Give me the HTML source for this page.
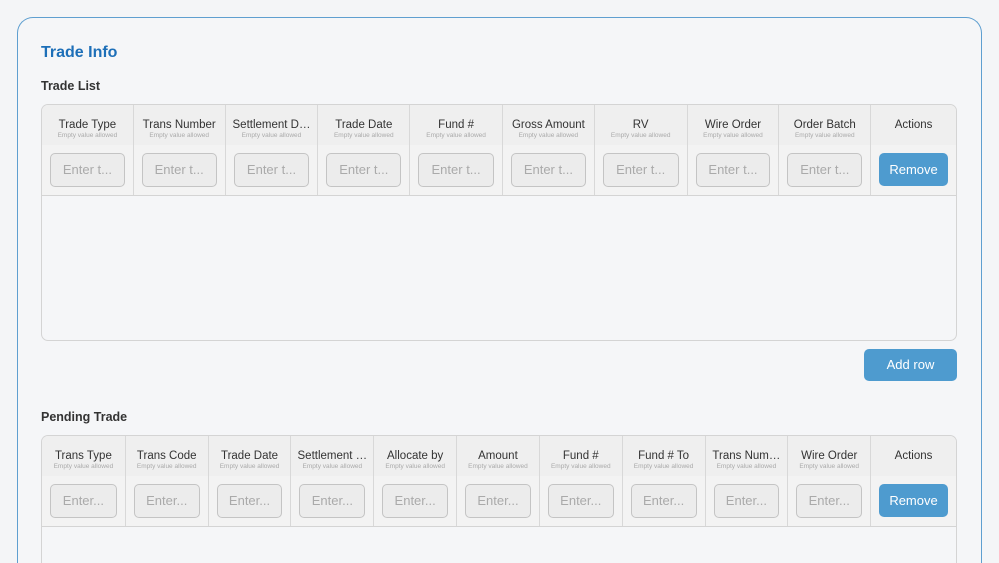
<!DOCTYPE html><html style="overflow:hidden;height:563px"><head><style>
*{box-sizing:border-box;margin:0;padding:0}
body{width:999px;height:563px;overflow:hidden;background:#f4f5f7;font-family:"Liberation Sans",sans-serif}
.wrap{position:relative;width:999px;height:563px;overflow:hidden}
.card{position:absolute;left:17px;top:17px;width:965px;height:546px;border:1px solid #5f9fd0;border-bottom:none;border-radius:16px 16px 0 0;background:#f5f6f8}
h1{position:absolute;left:41px;top:44px;font-size:16px;color:#1d6fb8;font-weight:bold}
h2{position:absolute;left:41px;font-size:12.5px;color:#333;font-weight:bold}
.tbl{position:absolute;left:41px;width:916px;border:1px solid #d4d4d4;border-radius:7px;overflow:hidden;background:#f5f6f8}
.row{display:flex}
.hd{height:40px;background:#efefef}
.in{height:51px;border-bottom:1px solid #d4d4d4;background:#f3f3f3}
.c{border-right:1px solid #d8d8d8;text-align:center;position:relative}
.c:last-child{border-right:none}
.hd .c{padding-top:14px;font-size:11.5px;color:#333;white-space:nowrap;overflow:hidden}
.hd .c small{display:block;font-size:6.5px;color:#aaa;margin-top:1px}
.box{position:absolute;left:8px;right:8px;top:8px;height:34px;border:1px solid #c4c4c4;border-radius:5px;background:#ececec;color:#aaa;font-size:13px;line-height:32px;text-align:center}
.btn{position:absolute;left:8px;right:8px;top:8px;height:33px;background:#4e9bcf;color:#fff;border-radius:5px;font-size:13px;line-height:33px;text-align:center}
.add{position:absolute;left:864px;top:349px;width:93px;height:32px;background:#4e9bcf;color:#fff;border-radius:5px;font-size:13px;line-height:32px;text-align:center}
</style></head><body><div class="wrap">
<div class="card"></div>
<h1>Trade Info</h1>
<h2 style="top:79px">Trade List</h2>
<div class="tbl" style="top:104px;height:237px">
<div class="row hd">
<div class="c" style="width:92px">Trade Type<small>Empty value allowed</small></div>
<div class="c" style="width:92px">Trans Number<small>Empty value allowed</small></div>
<div class="c" style="width:93px">Settlement D…<small>Empty value allowed</small></div>
<div class="c" style="width:92px">Trade Date<small>Empty value allowed</small></div>
<div class="c" style="width:93px">Fund #<small>Empty value allowed</small></div>
<div class="c" style="width:92px">Gross Amount<small>Empty value allowed</small></div>
<div class="c" style="width:93px">RV<small>Empty value allowed</small></div>
<div class="c" style="width:92px">Wire Order<small>Empty value allowed</small></div>
<div class="c" style="width:92px">Order Batch<small>Empty value allowed</small></div>
<div class="c" style="width:85px">Actions</div>
</div>
<div class="row in">
<div class="c" style="width:92px"><div class="box">Enter t...</div></div>
<div class="c" style="width:92px"><div class="box">Enter t...</div></div>
<div class="c" style="width:93px"><div class="box">Enter t...</div></div>
<div class="c" style="width:92px"><div class="box">Enter t...</div></div>
<div class="c" style="width:93px"><div class="box">Enter t...</div></div>
<div class="c" style="width:92px"><div class="box">Enter t...</div></div>
<div class="c" style="width:93px"><div class="box">Enter t...</div></div>
<div class="c" style="width:92px"><div class="box">Enter t...</div></div>
<div class="c" style="width:92px"><div class="box">Enter t...</div></div>
<div class="c" style="width:85px"><div class="btn">Remove</div></div>
</div>
</div>
<div class="add">Add row</div>
<h2 style="top:410px">Pending Trade</h2>
<div class="tbl" style="top:435px;height:128px;border-bottom:none;border-radius:7px 7px 0 0">
<div class="row hd">
<div class="c" style="width:84px">Trans Type<small>Empty value allowed</small></div>
<div class="c" style="width:83px">Trans Code<small>Empty value allowed</small></div>
<div class="c" style="width:83px">Trade Date<small>Empty value allowed</small></div>
<div class="c" style="width:83px">Settlement …<small>Empty value allowed</small></div>
<div class="c" style="width:83px">Allocate by<small>Empty value allowed</small></div>
<div class="c" style="width:83px">Amount<small>Empty value allowed</small></div>
<div class="c" style="width:83px">Fund #<small>Empty value allowed</small></div>
<div class="c" style="width:83px">Fund # To<small>Empty value allowed</small></div>
<div class="c" style="width:83px">Trans Num…<small>Empty value allowed</small></div>
<div class="c" style="width:83px">Wire Order<small>Empty value allowed</small></div>
<div class="c" style="width:85px">Actions</div>
</div>
<div class="row in">
<div class="c" style="width:84px"><div class="box">Enter...</div></div>
<div class="c" style="width:83px"><div class="box">Enter...</div></div>
<div class="c" style="width:83px"><div class="box">Enter...</div></div>
<div class="c" style="width:83px"><div class="box">Enter...</div></div>
<div class="c" style="width:83px"><div class="box">Enter...</div></div>
<div class="c" style="width:83px"><div class="box">Enter...</div></div>
<div class="c" style="width:83px"><div class="box">Enter...</div></div>
<div class="c" style="width:83px"><div class="box">Enter...</div></div>
<div class="c" style="width:83px"><div class="box">Enter...</div></div>
<div class="c" style="width:83px"><div class="box">Enter...</div></div>
<div class="c" style="width:85px"><div class="btn">Remove</div></div>
</div>
</div>
</div></body></html>
